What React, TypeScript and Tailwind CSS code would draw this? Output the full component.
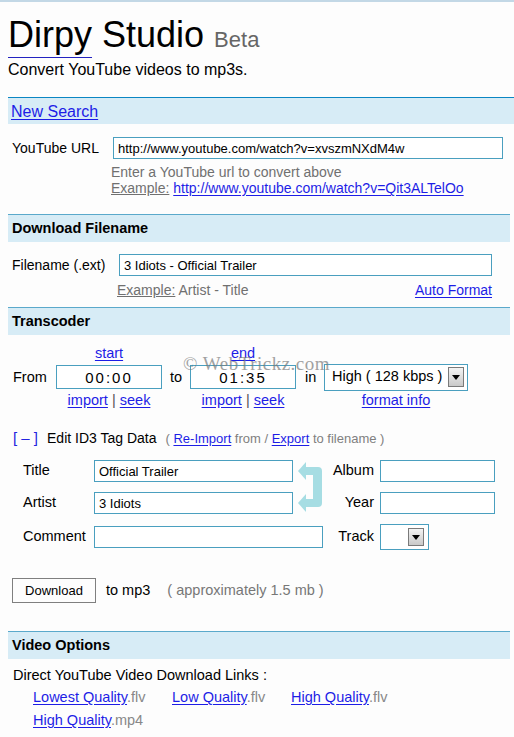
import type { ReactNode } from "react";

const link = "text-[#1d1de6] underline underline-offset-[2px]";
const field = "border border-[#4a9fbf] bg-white outline-none";

function SectionHeader({ children }: { children: ReactNode }) {
  return (
    <div className="h-[28px] border-t border-[#5aa9cb] bg-[#d7ecf6] pl-1 text-[14.5px] font-bold leading-[27px]">
      {children}
    </div>
  );
}

// little grey drop button drawn inside the fake selects
function DropButton({ className }: { className: string }) {
  return (
    <span
      className={`flex items-center justify-center border border-[#7a7a7a] bg-gradient-to-b from-[#f4f4f4] to-[#c9c9c9] ${className}`}
    >
      <svg width="8" height="5" viewBox="0 0 8 5">
        <path d="M0 0h8L4 5z" fill="#000" />
      </svg>
    </span>
  );
}

function TimeBox({ top, value }: { top: string; value: string }) {
  return (
    <div className="flex w-[106px] flex-col items-center">
      <a className={`${link} leading-4`}>{top}</a>
      <input
        readOnly
        value={value}
        className={`${field} mt-[4px] h-[24px] w-[106px] text-center text-[15px] tracking-[2px]`}
      />
      <div className="mt-[3px] leading-4">
        <a className={link}>import</a> <span className="text-[#555]">|</span>{" "}
        <a className={link}>seek</a>
      </div>
    </div>
  );
}

// the teal bracket that swaps title and artist
function SwapArrow() {
  return (
    <svg width="26" height="54" viewBox="0 0 26 54" className="ml-[5px]">
      <g fill="#a6dde3">
        <path d="M0 11 8 2v18z" />
        <path d="M0 43 8 34v18z" />
        <path d="M7 7h13a4 4 0 0 1 4 4v32a4 4 0 0 1-4 4H7v-8h8V15H7z" />
      </g>
    </svg>
  );
}

export default function App() {
  return (
    <div className="min-h-screen bg-[#fdfdfd] font-['Liberation_Sans',Arial,sans-serif] text-[14px] text-black">
      <div className="h-[2px] bg-[#c3d8e6]" />
      <div className="pl-2 pr-1">
        <h1 className="mt-[13px] h-[40px] text-[36px] leading-[40px]">
          <span className="underline decoration-[#2222c0] decoration-1 underline-offset-[10px]">
            Dirpy
          </span>{" "}
          Studio <span className="text-[22px] leading-none text-[#666]">Beta</span>
        </h1>
        <p className="mt-[6px] text-[16px] leading-[18px]">Convert YouTube videos to mp3s.</p>

        <div className="mt-[18px] -mr-1 h-[27px] border-t border-[#0b86c3] bg-[#d7ecf6] pl-[3px] text-[16px] leading-[27px]">
          <a className={link}>New Search</a>
        </div>

        <div className="mt-[13px] flex items-center pl-[4px]">
          <label className="w-[101px]">YouTube URL</label>
          <input
            readOnly
            value="http://www.youtube.com/watch?v=xvszmNXdM4w"
            className={`${field} h-[22px] w-[390px] pl-[4px] text-[13px]`}
          />
        </div>
        <div className="mt-[5px] ml-[103px] leading-4 text-[#707070]">
          <div>Enter a YouTube url to convert above</div>
          <div>
            <span className="underline">Example:</span>{" "}
            <a className={link}>http://www.youtube.com/watch?v=Qit3ALTelOo</a>
          </div>
        </div>

        <div className="mt-[18px]">
          <SectionHeader>Download Filename</SectionHeader>
        </div>
        <div className="mt-[12px] flex items-center pl-[4px]">
          <label className="w-[107px]">Filename (.ext)</label>
          <input
            readOnly
            value="3 Idiots - Official Trailer"
            className={`${field} h-[22px] w-[373px] pl-[4px] text-[13px]`}
          />
        </div>
        <div className="mt-[6px] flex w-[484px] justify-between pl-[109px] leading-4">
          <span className="text-[#707070]">
            <span className="underline">Example:</span> Artist - Title
          </span>
          <a className={link}>Auto Format</a>
        </div>

        <div className="mt-[9px]">
          <SectionHeader>Transcoder</SectionHeader>
        </div>
        <div className="relative mt-[10px] flex items-start pl-[5px] text-[14.5px]">
          <span className="mt-[20px] w-[43px] leading-[24px]">From</span>
          <TimeBox top="start" value="00:00" />
          <span className="mt-[20px] w-[28px] pl-[8px] leading-[24px]">to</span>
          <TimeBox top="end" value="01:35" />
          <span className="mt-[20px] w-[28px] pl-[9px] leading-[24px]">in</span>
          <div className="flex w-[144px] flex-col items-center">
            <div className="h-4" />
            <div className="mt-[4px] flex h-[24px] items-center">
              <div className={`${field} flex h-[27px] w-[144px] items-center pl-[7px]`}>
                <span>High ( 128 kbps )</span>
                <DropButton className="ml-auto mr-[3px] h-[20px] w-[16px]" />
              </div>
            </div>
            <a className={`${link} mt-[3px] leading-4`}>format info</a>
          </div>
          <span className="pointer-events-none absolute left-[175px] top-[9px] font-['Liberation_Serif',serif] text-[19px] leading-5 tracking-[0.5px] text-[#7a7a7a] opacity-70">
            © WebTrickz.com
          </span>
        </div>

        <div className="mt-[22px] flex items-baseline pl-[5px] leading-4">
          <a className="text-[15px] text-[#2323e0]">[ – ]</a>
          <span className="ml-[9px]">Edit ID3 Tag Data</span>
          <span className="ml-[9px] text-[13px] text-[#808080]">
            ( <a className={link}>Re-Import</a> from / <a className={link}>Export</a> to filename )
          </span>
        </div>

        <div className="mt-[13px] ml-[15px] grid grid-cols-[71px_199px_30px_57px_115px] grid-rows-[22px_22px_26px] gap-y-[10px] text-[14.5px]">
          <span className="self-center">Title</span>
          <input readOnly value="Official Trailer" className={`${field} h-[22px] pl-[4px] text-[13px]`} />
          <div className="row-span-2">
            <SwapArrow />
          </div>
          <span className="self-center pr-[6px] text-right">Album</span>
          <input readOnly className={`${field} h-[22px]`} />

          <span className="self-center">Artist</span>
          <input readOnly value="3 Idiots" className={`${field} h-[22px] pl-[4px] text-[13px]`} />
          <span className="self-center pr-[6px] text-right">Year</span>
          <input readOnly className={`${field} h-[22px]`} />

          <span className="self-center">Comment</span>
          <input readOnly className={`${field} col-span-2 h-[22px] self-center`} />
          <span className="self-center pr-[6px] text-right">Track</span>
          <div className={`${field} flex h-[26px] w-[49px] items-center`}>
            <DropButton className="ml-auto mr-[4px] h-[18px] w-[16px]" />
          </div>
        </div>

        <div className="mt-[28px] flex items-center pl-[4px] text-[14.5px]">
          <button className="h-[25px] w-[84px] border border-[#7f7f7f] bg-[#fdfdfd] text-[13px]">
            Download
          </button>
          <span className="ml-[10px]">to mp3</span>
          <span className="ml-[17px] text-[#777]">( approximately 1.5 mb )</span>
        </div>

        <div className="mt-[28px]">
          <SectionHeader>Video Options</SectionHeader>
        </div>
        <div className="mt-[8px] pl-[5px] text-[14.5px] leading-4">
          Direct YouTube Video Download Links :
        </div>
        <div className="mt-[3px] pl-[25px] text-[14.5px] leading-[23px]">
          <div className="flex">
            <span className="w-[139px]">
              <a className={link}>Lowest Quality</a>
              <span className="text-[#888]">.flv</span>
            </span>
            <span className="w-[119px]">
              <a className={link}>Low Quality</a>
              <span className="text-[#888]">.flv</span>
            </span>
            <span>
              <a className={link}>High Quality</a>
              <span className="text-[#888]">.flv</span>
            </span>
          </div>
          <div>
            <a className={link}>High Quality</a>
            <span className="text-[#888]">.mp4</span>
          </div>
        </div>
      </div>
    </div>
  );
}
